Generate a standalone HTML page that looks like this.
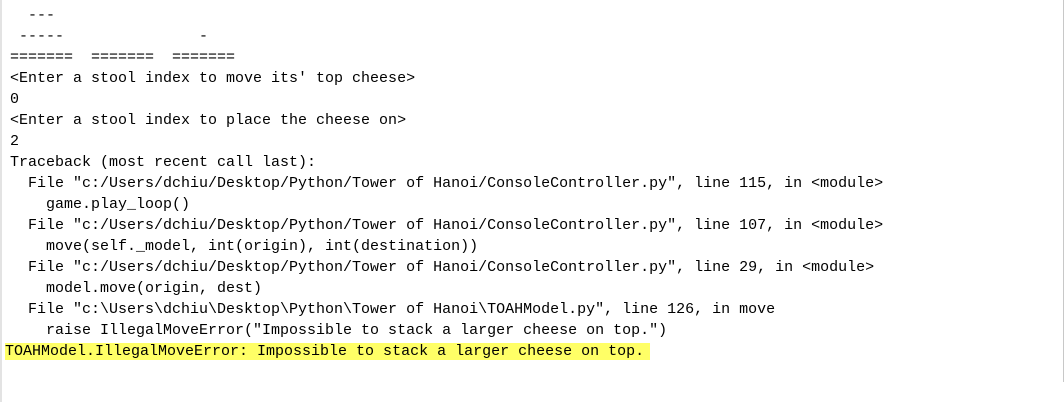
<!DOCTYPE html>
<html><head><style>
html,body{margin:0;padding:0;background:#fff;width:1064px;height:407px;overflow:hidden;position:relative}
.l{position:absolute;left:0;top:0;width:2px;height:402px;background:#e3e3e3}
.r{position:absolute;right:0;top:0;width:1px;height:382px;background:#c8c8c8}
pre{position:absolute;left:10px;top:5px;margin:0;font-family:"Liberation Mono",monospace;font-size:15px;line-height:21px;color:#000}
.h{background:#ffff66;margin-left:-5px;padding-right:6px}
</style></head><body>
<div class="l"></div><div class="r"></div>
<pre>  ---
 -----               -
=======  =======  =======
&lt;Enter a stool index to move its' top cheese&gt;
0
&lt;Enter a stool index to place the cheese on&gt;
2
Traceback (most recent call last):
  File "c:/Users/dchiu/Desktop/Python/Tower of Hanoi/ConsoleController.py", line 115, in &lt;module&gt;
    game.play_loop()
  File "c:/Users/dchiu/Desktop/Python/Tower of Hanoi/ConsoleController.py", line 107, in &lt;module&gt;
    move(self._model, int(origin), int(destination))
  File "c:/Users/dchiu/Desktop/Python/Tower of Hanoi/ConsoleController.py", line 29, in &lt;module&gt;
    model.move(origin, dest)
  File "c:\Users\dchiu\Desktop\Python\Tower of Hanoi\TOAHModel.py", line 126, in move
    raise IllegalMoveError("Impossible to stack a larger cheese on top.")
<span class="h">TOAHModel.IllegalMoveError: Impossible to stack a larger cheese on top.</span></pre>
</body></html>
